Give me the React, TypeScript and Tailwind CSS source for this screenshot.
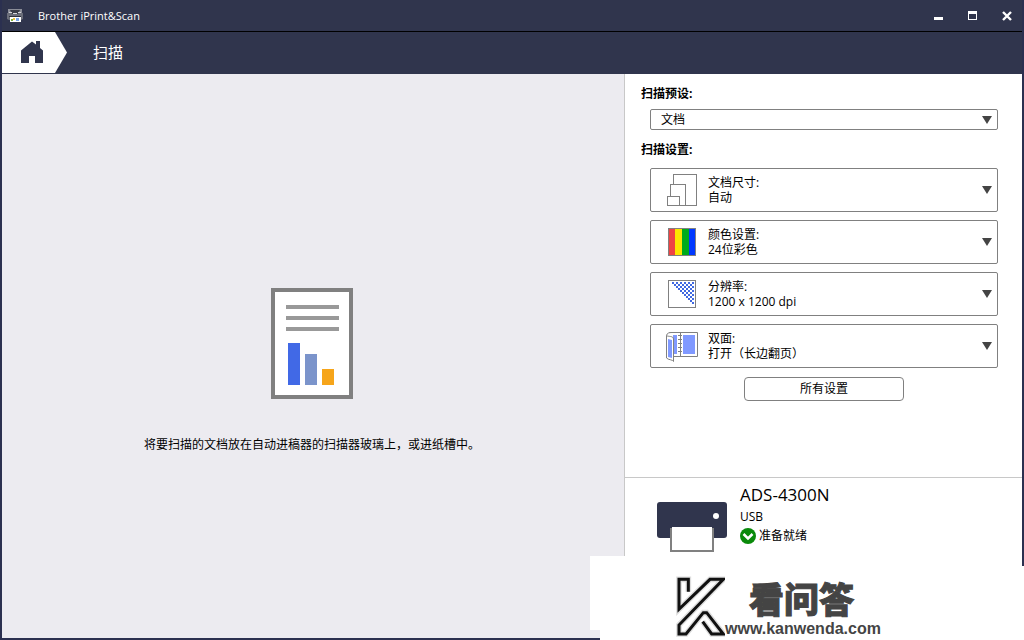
import React, { useState } from 'react';

interface ScanSetting {
  id: string;
  label: string;
  options: string[];
  icon: React.ReactNode;
}

const SizeIcon = () => (
  <svg width="32" height="32" viewBox="0 0 32 32" fill="#fff" stroke="#808080" aria-hidden="true">
    <rect x="7.5" y="0.5" width="23" height="31" />
    <rect x="4.5" y="10.5" width="15" height="21" />
    <rect x="1.5" y="22.5" width="12" height="9" />
  </svg>
);

const ColorIcon = () => (
  <svg width="32" height="32" viewBox="0 0 32 32" shapeRendering="crispEdges" aria-hidden="true">
    <rect x="2" y="2" width="28" height="28" fill="#808080" />
    <rect x="3" y="3" width="6" height="26" fill="#ee4444" />
    <rect x="9" y="3" width="7" height="26" fill="#fbe600" />
    <rect x="16" y="3" width="7" height="26" fill="#00ab1b" />
    <rect x="23" y="3" width="6" height="26" fill="#0038ff" />
  </svg>
);

const ResolutionIcon = () => {
  const cells: React.ReactNode[] = [];
  for (let row = 0; row < 11; row++) {
    for (let col = row; col < 11; col += 2) {
      cells.push(
        <rect key={`${row}-${col}`} x={6 + col * 2} y={4 + row * 2} width="2" height="2" fill="#4169e1" />
      );
    }
  }
  return (
    <svg width="32" height="32" viewBox="0 0 32 32" shapeRendering="crispEdges" aria-hidden="true">
      <rect x="2" y="2" width="28" height="28" fill="#808080" />
      <rect x="3" y="3" width="26" height="26" fill="#fff" />
      {cells}
    </svg>
  );
};

const DuplexIcon = () => (
  <svg width="32" height="32" viewBox="0 0 32 32" fill="none" aria-hidden="true">
    <path d="M3 2.5H31.5V26.5H8" stroke="#808080" />
    <rect x="7" y="5" width="4" height="19" fill="#8099ff" />
    <rect x="17" y="5" width="12" height="19" fill="#8099ff" />
    <path d="M14.5 2V27" stroke="#808080" />
    <path d="M12 5.5h4M12 9.5h4M12 13.5h4M12 17.5h4M12 21.5h4" stroke="#808080" />
    <path d="M0.5 5.5C1 3 3 2.5 6 2.5M0.5 5.5C2 7 7.5 5.5 7.5 9V31.5C7 29.5 2 30 0.5 28Z" fill="#fff" stroke="#808080" />
    <path d="M2 9L6 10V28L2 27Z" fill="#8099ff" />
  </svg>
);

const settings: ScanSetting[] = [
  { id: 'size', label: '文档尺寸:', options: ['自动', 'A4', 'A5'], icon: <SizeIcon /> },
  { id: 'color', label: '颜色设置:', options: ['24位彩色', '灰度', '黑白'], icon: <ColorIcon /> },
  {
    id: 'resolution',
    label: '分辨率:',
    options: ['1200 x 1200 dpi', '600 x 600 dpi', '300 x 300 dpi'],
    icon: <ResolutionIcon />,
  },
  { id: 'duplex', label: '双面:', options: ['打开（长边翻页）', '打开（短边翻页）', '关闭'], icon: <DuplexIcon /> },
];

const Arrow = () => (
  <svg className="pointer-events-none shrink-0" width="10" height="8" viewBox="0 0 10 8" aria-hidden="true">
    <path d="M0 0H10L5 8Z" fill="#444" />
  </svg>
);

const TitleBar = () => (
  <header className="flex h-8 items-center border-b border-black pl-[5px] text-white">
    <svg width="16" height="16" viewBox="0 0 16 16" aria-hidden="true">
      <path d="M1 1h14v4H1z" fill="#8b8d98" />
      <path d="M0 5h16v6l-2 1H2l-2-1z" fill="#6b6e7a" />
      <path d="M3 2h10l-2 4H5z" fill="#3a3d48" />
      <path d="M2 4h3v1H2zM11 4h3v1h-3zM6 5h4v1H6z" fill="#d5d6da" />
      <path d="M2 8h12v1H2z" fill="#30333d" />
      <path d="M3 9h11v5H3z" fill="#fff" />
      <path d="M4 11h2v2H4z" fill="#7fb23c" />
      <path d="M6 10h2v2H6z" fill="#f0c341" />
      <path d="M9 10h3v3H9z" fill="#7aa5e8" />
    </svg>
    <h1 className="ml-[15px] flex-1 text-[11px] leading-4">Brother iPrint&amp;Scan</h1>
    <div className="flex h-full">
      <button type="button" aria-label="最小化" className="flex w-[34px] items-center justify-center pl-0.5">
        <svg width="9" height="9" viewBox="0 0 9 9">
          <path d="M0 6h9v3H0z" fill="#fff" />
        </svg>
      </button>
      <button type="button" aria-label="最大化" className="flex w-[34px] items-center justify-center pl-0.5">
        <svg width="9" height="9" viewBox="0 0 9 9">
          <path d="M0 0h9v9H0zM1 3v5h7V3z" fill="#fff" fillRule="evenodd" />
        </svg>
      </button>
      <button type="button" aria-label="关闭" className="flex w-[34px] items-center justify-center pl-1">
        <svg width="10" height="10" viewBox="0 0 10 10">
          <path d="M1 1l8 8M9 1L1 9" stroke="#fff" strokeWidth="2.4" />
        </svg>
      </button>
    </div>
  </header>
);

const NavBar = () => (
  <nav className="flex h-[42px] items-start text-white">
    <button
      type="button"
      aria-label="主页"
      className="flex h-[41px] w-[65px] items-center bg-white pb-0.5 pl-[19px] [clip-path:polygon(0_0,53px_0,100%_50%,53px_100%,0_100%)]"
    >
      <svg width="22" height="22" viewBox="0 0 22 22" aria-hidden="true">
        <path d="M0 9.5L11 0.5L15 3.5V0H19V7L22 9.5V22H14V15H8V22H0Z" fill="#30354d" />
      </svg>
    </button>
    <h2 className="ml-[26px] text-[15px] leading-[41px]">扫描</h2>
  </nav>
);

const EmptyPreview = () => (
  <section className="flex flex-1 flex-col items-center justify-center bg-[#ecebf0] pt-7 pr-0.5">
    <svg width="82" height="111" viewBox="0 0 82 111" aria-hidden="true">
      <rect x="2" y="2" width="78" height="107" fill="#fff" stroke="#808080" strokeWidth="4" />
      <path d="M15 19h53M15 30h53M15 41h53" stroke="#999" strokeWidth="4" />
      <rect x="17" y="55" width="12" height="42" fill="#4169e6" />
      <rect x="34" y="66" width="12" height="31" fill="#7b94cb" />
      <rect x="51" y="81" width="12" height="16" fill="#f6a51a" />
    </svg>
    <p className="mt-[38px] text-[12px] leading-4">将要扫描的文档放在自动进稿器的扫描器玻璃上，或进纸槽中。</p>
  </section>
);

const SettingRow = ({ setting }: { setting: ScanSetting }) => {
  const [value, setValue] = useState(setting.options[0]);

  return (
    <div className="flex h-11 items-center gap-[10px] rounded-[2px] border border-[#808080] bg-white pr-[5px] pl-[15px]">
      <span className="shrink-0">{setting.icon}</span>
      <div className="flex flex-1 flex-col">
        <label htmlFor={setting.id} className="text-[12px] leading-[15px]">
          {setting.label}
        </label>
        <select
          id={setting.id}
          value={value}
          onChange={(e) => setValue(e.target.value)}
          className="h-[15px] w-full appearance-none bg-transparent text-[12px] leading-[15px] outline-none"
        >
          {setting.options.map((option) => (
            <option key={option}>{option}</option>
          ))}
        </select>
      </div>
      <Arrow />
    </div>
  );
};

const DevicePanel = () => (
  <footer className="flex h-[161px] items-start border-t border-[#c8c8c8] pt-2 pl-8">
    <svg className="mt-4" width="70" height="50" viewBox="0 0 70 50" aria-hidden="true">
      <rect width="70" height="36" rx="3" fill="#30354d" />
      <circle cx="59" cy="14" r="3" fill="#fff" />
      <rect x="14" y="27" width="42" height="22" fill="#fff" stroke="#808080" strokeWidth="2" />
      <path d="M15 26.5h40" stroke="#fff" strokeWidth="3" />
    </svg>
    <div className="ml-[13px]">
      <p className="text-[17px] leading-[18px]">ADS-4300N</p>
      <p className="mt-[5px] text-[12px] leading-4">USB</p>
      <p className="mt-[3px] flex items-center gap-[3px] text-[12px] leading-4">
        <svg width="16" height="16" viewBox="0 0 16 16" aria-hidden="true">
          <circle cx="8" cy="8" r="8" fill="#0a8a0a" />
          <path d="M3.5 6L8 10.5L12.500 6" fill="none" stroke="#fff" strokeWidth="2.5" />
        </svg>
        准备就绪
      </p>
    </div>
  </footer>
);

const K_PATH = 'M85 80V43H57V133L150 43H190L57 180V207H78L130 143H140L190 207H155L128 170';

// Site badge laid over the lower right corner of the window
const SiteBadge = () => (
  <>
    <div className="absolute right-[2px] bottom-[10px] h-[74px] w-[432px] bg-white" />
    <div className="absolute right-0 bottom-0 flex h-[74px] w-[424px] bg-white pl-[70px]">
      <svg className="shrink-0" width="55" height="74" viewBox="30 3 165 222" fill="none" aria-hidden="true">
        <path d={K_PATH} stroke="#ddd" strokeWidth="17" />
        <path d={K_PATH} stroke="#111" strokeWidth="9" />
      </svg>
      <div className="pt-4 font-['Liberation_Sans','Noto_Sans_CJK_SC',sans-serif] font-bold text-[#444]">
        <p className="pl-[24px] text-[35px] leading-[38px] font-black [-webkit-text-stroke:1px_#444]">看问答</p>
        <p className="text-[16px] leading-[18px]">www.kanwenda.com</p>
      </div>
    </div>
  </>
);

const App: React.FC = () => {
  const [preset, setPreset] = useState('文档');

  return (
    <div className="relative h-screen overflow-hidden font-['Open_Sans','Noto_Sans_CJK_SC',sans-serif] text-black">
      <div className="flex h-full flex-col border-x-2 border-b-2 border-[#2b3050] bg-[#30354d]">
        <TitleBar />
        <NavBar />

        <main className="flex min-h-0 flex-1">
          <EmptyPreview />

          <aside className="flex w-[398px] flex-col border-l border-[#c8c8c8] bg-white">
            <div className="flex-1 pt-3 pr-6 pl-[25px]">
              <label htmlFor="preset" className="-ml-[9px] block text-[12px] leading-4 font-bold">
                扫描预设:
              </label>
              <div className="mt-[7px] flex h-[21px] items-center rounded-[2px] border border-[#808080] pr-[5px] pl-[10px]">
                <select
                  id="preset"
                  value={preset}
                  onChange={(e) => setPreset(e.target.value)}
                  className="h-[15px] flex-1 appearance-none bg-transparent text-[12px] leading-[15px] outline-none"
                >
                  <option>文档</option>
                  <option>照片</option>
                </select>
                <Arrow />
              </div>

              <h3 className="mt-3 -ml-[9px] text-[12px] leading-4 font-bold">扫描设置:</h3>
              <div className="mt-[10px] flex flex-col gap-2">
                {settings.map((setting) => (
                  <SettingRow key={setting.id} setting={setting} />
                ))}
              </div>
              <button
                type="button"
                className="mx-auto mt-[9px] block h-6 w-40 rounded-[4px] border border-[#808080] text-[12px] leading-4"
              >
                所有设置
              </button>
            </div>

            <DevicePanel />
          </aside>
        </main>
      </div>

      <SiteBadge />
    </div>
  );
};

export default App;
